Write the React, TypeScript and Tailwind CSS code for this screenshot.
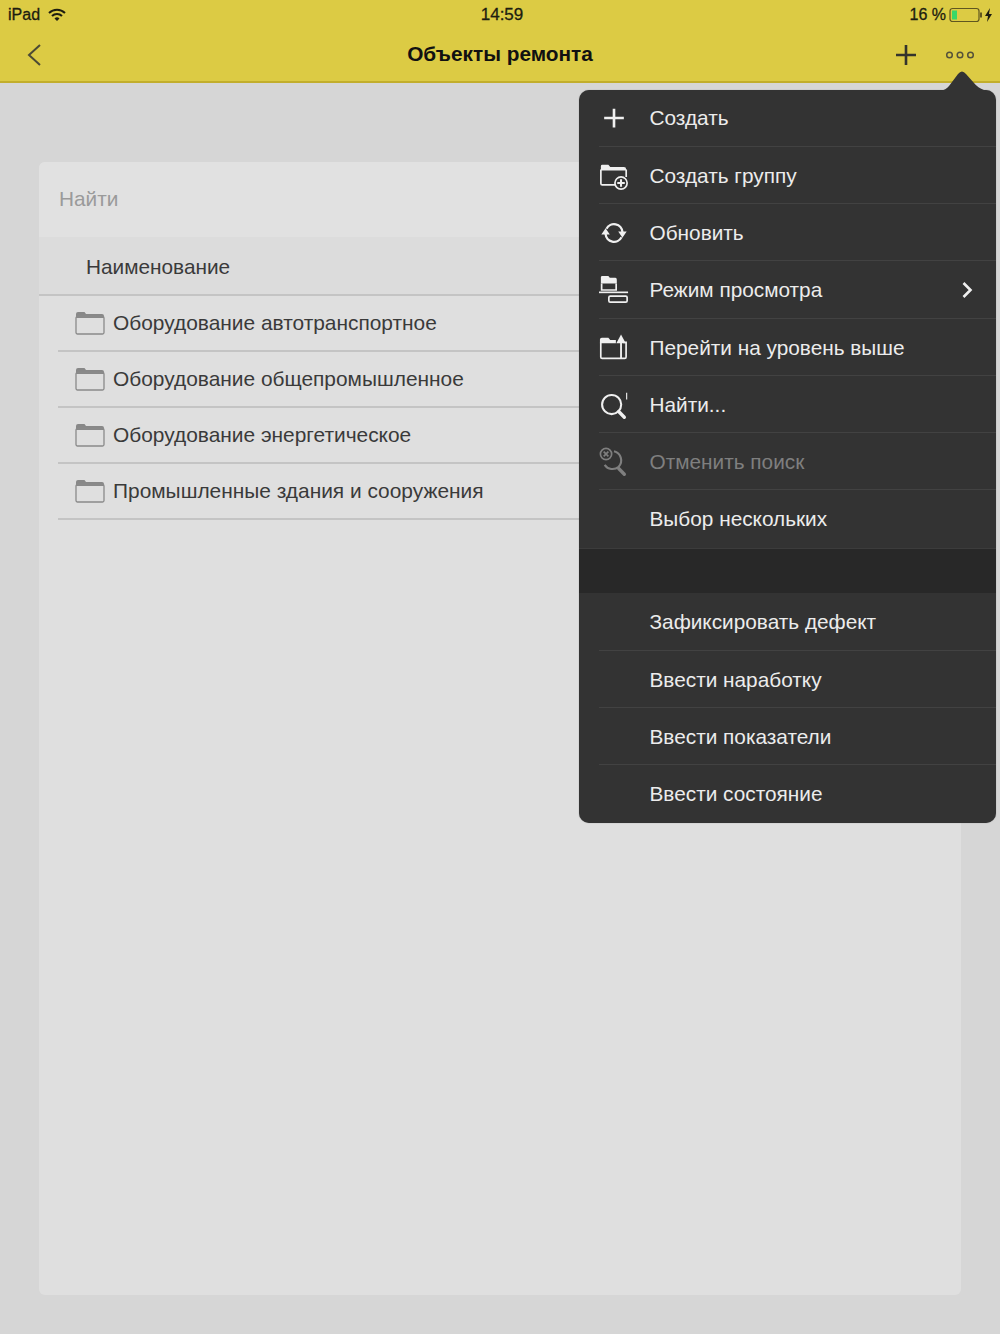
import React from "react";

const font = "font-['Liberation_Sans','Noto_Sans',sans-serif]";

function Ic({ children, op = "" }: { children: React.ReactNode; op?: string }) {
  return (
    <svg width="32" height="32" viewBox="0 0 32 32" fill="none" stroke="#f0f0f0" strokeWidth="1.8" className={op}>
      {children}
    </svg>
  );
}

const icons: Record<string, React.ReactNode> = {
  plus: (
    <Ic>
      <path d="M16 6v20M5.500 16h21" strokeWidth="2.800" />
    </Ic>
  ),
  group: (
    <Ic>
      <path d="M2 10V5.500Q2 4 3.500 4H10l2 2.500h14.500Q29 6.500 29 9v1z" fill="#f0f0f0" stroke="none" />
      <path d="M2 9v15q0 1.500 1.500 1.500H20M29 9v8" />
      <circle cx="23.500" cy="23.500" r="6.500" fill="#333" />
      <path d="M23.500 19.500v8M19.500 23.500h8" strokeWidth="2.200" />
    </Ic>
  ),
  refresh: (
    <Ic>
      <path d="M8 11.500A9 9 0 0 1 25 15M24 20.500A9 9 0 0 1 7 17" strokeWidth="2.400" />
      <path d="M20.500 14.500h9l-4.500 6.500zM2.500 17.500h9l-4.500-6.500z" fill="#f0f0f0" stroke="none" />
    </Ic>
  ),
  view: (
    <Ic>
      <path d="M2 9V2.500Q2 1 3.500 1H10l1.500 2h6Q19 3 19 5v4z" fill="#f0f0f0" stroke="none" />
      <path d="M2.800 9v7h15.500V9" />
      <path d="M0 18.500h31" />
      <rect x="10.500" y="22.500" width="19.500" height="6.500" rx="1.500" />
    </Ic>
  ),
  up: (
    <Ic>
      <path d="M1 11V7Q1 5 3 5h7l2 2.500h6V11z" fill="#f0f0f0" stroke="none" />
      <path d="M1.900 10v15.500q0 1.500 1.500 1.500h24q1.500 0 1.500-1.500V10h-3" />
      <path d="M23.500 27V9" strokeWidth="2" />
      <path d="M18.500 11l5-9.500 5 9.500z" fill="#f0f0f0" stroke="none" />
    </Ic>
  ),
  find: (
    <Ic>
      <circle cx="13.500" cy="15.500" r="10.200" strokeWidth="2.200" />
      <path d="M21 23l6 6" strokeWidth="3.600" strokeLinecap="round" />
      <path d="M29.500 3v7" strokeWidth="1.200" />
    </Ic>
  ),
  cancel: (
    <Ic op="opacity-40">
      <circle cx="7.500" cy="7.500" r="6" />
      <path d="M5 5l5 5M10 5l-5 5" />
      <path d="M16 4.500A10 10 0 0 1 21 21A10 10 0 0 1 6 19" strokeWidth="2.200" />
      <path d="M21 23l6 6" strokeWidth="3.600" strokeLinecap="round" />
    </Ic>
  ),
};

function MenuRow({ icon, label, dim, chevron, last, h }: { icon?: string; label: string; dim?: boolean; chevron?: boolean; last?: boolean; h: string }) {
  return (
    <div className={`relative flex items-center pl-[20px] ${h}`}>
      <div className="w-[30px] flex justify-center shrink-0">{icon && icons[icon]}</div>
      <span className={`ml-[20.500px] text-[20.8px] leading-none ${dim ? "text-[#7f7f7f]" : "text-[#ececec]"}`}>{label}</span>
      {chevron && (
        <svg width="12" height="18" viewBox="0 0 12 18" fill="none" stroke="#f0f0f0" strokeWidth="2.600" className="ml-auto mr-[23px]">
          <path d="M2.500 2l7 7-7 7" />
        </svg>
      )}
      {!last && <div className="absolute left-[20px] right-0 bottom-0 h-px bg-[#424242]" />}
    </div>
  );
}

function Folder() {
  return (
    <svg width="30" height="24" viewBox="0 0 30 24" fill="none" className="shrink-0">
      <path d="M1 7V3Q1 1 3 1h6.500l1.500 2h16q2 0 2 2v2z" fill="#888" />
      <rect x="1" y="5.500" width="28" height="17.500" rx="1.500" stroke="#8a8a8a" strokeWidth="1.300" />
    </svg>
  );
}

function TableRow({ label }: { label: string }) {
  return (
    <div className="pl-[36px] h-[56px] flex items-center relative pb-[2px]">
      <Folder />
      <span className="ml-[8px] text-[20.9px] leading-none text-[#3a3a3a]">{label}</span>
      <div className="absolute left-[19px] right-0 bottom-0 h-[2px] bg-[#c4c4c4]" />
    </div>
  );
}

export default function App() {
  return (
    <div className={`${font} relative w-[1000px] h-[1334px] overflow-hidden bg-[#d6d6d6] flex flex-col`}>
      <header className="h-[83px] shrink-0 bg-[#dccb44] border-b-2 border-[#c2ae2c] relative flex flex-col">
        <div className="h-[28px] pt-[1px] px-[8px] flex items-center text-[16px] text-[#1d1d10] relative [-webkit-text-stroke:0.3px]">
          <span>iPad</span>
          <svg width="18" height="14" viewBox="0 0 18 14" className="ml-[8px]" fill="none" stroke="#1d1d10" strokeWidth="2">
            <path d="M1 5a11.500 11.500 0 0 1 16 0M4 8a7 7 0 0 1 10 0" />
            <path d="M6.500 10.500L9 13l2.500-2.500a3.500 3.500 0 0 0-5 0z" fill="#1d1d10" stroke="none" />
          </svg>
          <span className="absolute left-0 right-0 text-center pl-[4px] text-[17px]">14:59</span>
          <span className="ml-auto mr-[3px]">16 %</span>
          <svg width="44" height="16" viewBox="0 0 44 16" fill="none" className="mr-[-1px]">
            <rect x="1" y="1.500" width="29" height="13" rx="2.500" stroke="#5f5620" strokeWidth="1.200" />
            <rect x="3" y="3.500" width="5" height="9" fill="#38d868" />
            <rect x="31" y="5.500" width="2" height="5" fill="#5f5620" />
            <path d="M42 1l-5 8h3l-1 6 5-8h-3z" fill="#1d1d10" transform="translate(-1 0)" />
          </svg>
        </div>
        <div className="flex-1 relative flex items-center justify-between pl-[26px] pr-[25px] pt-[1px]">
          <svg width="16" height="24" viewBox="0 0 16 24" fill="none" stroke="#4b4a34" strokeWidth="2">
            <path d="M14 2L3 12l11 10" />
          </svg>
          <span className="absolute left-0 right-0 text-center text-[20.800px] font-bold text-[#111] top-[16px] leading-none">Объекты ремонта</span>
          <div className="flex items-center gap-[28px]">
            <svg width="22" height="22" viewBox="0 0 22 22" fill="none" stroke="#34342c" strokeWidth="2.600">
              <path d="M11 1v20M1 11h20" />
            </svg>
            <svg width="30" height="10" viewBox="0 0 30 10" fill="none" stroke="#55523a" strokeWidth="1.500">
              <circle cx="4.500" cy="5" r="2.800" />
              <circle cx="15" cy="5" r="2.800" />
              <circle cx="25.500" cy="5" r="2.800" />
            </svg>
          </div>
        </div>
      </header>

      <main className="flex-1 pt-[79px] pb-[39px] px-[39px]">
        <div className="h-full rounded-[6px] bg-[#dfdfdf] overflow-hidden">
          <div className="h-[75px] pl-[20px] pb-[2px] flex items-center text-[20.8px] text-[#9a9a9a] bg-[#e1e1e1]">Найти</div>
          <div className="h-[59px] pl-[47px] pt-[2px] flex items-center text-[20.8px] text-[#3a3a3a] bg-[#dcdcdc] border-b-2 border-[#c4c4c4]">Наименование</div>
          <TableRow label="Оборудование автотранспортное" />
          <TableRow label="Оборудование общепромышленное" />
          <TableRow label="Оборудование энергетическое" />
          <TableRow label="Промышленные здания и сооружения" />
        </div>
      </main>

      <div className="absolute left-[579px] top-[90px] w-[417px] h-[733px] rounded-[10px] bg-[#333333] flex flex-col shadow-[0_0_1px_#777]">
        <svg width="44" height="24" viewBox="0 0 44 24" className="absolute right-[12px] top-[-21px]">
          <path d="M0 22Q6 21 9 17L18 5Q22 0 26 5L34 14Q38 19 44 21V24H0z" fill="#333333" />
        </svg>
        <MenuRow h="h-[57px] pb-[1px]" icon="plus" label="Создать" />
        <MenuRow h="h-[57px] pt-[1px]" icon="group" label="Создать группу" />
        <MenuRow h="h-[57px] pt-[1px]" icon="refresh" label="Обновить" />
        <MenuRow h="h-[58px]" icon="view" label="Режим просмотра" chevron />
        <MenuRow h="h-[57px] pt-[1px]" icon="up" label="Перейти на уровень выше" />
        <MenuRow h="h-[57px] pt-[1px]" icon="find" label="Найти..." />
        <MenuRow h="h-[57px] pt-[1px]" icon="cancel" label="Отменить поиск" dim />
        <MenuRow h="h-[58px]" label="Выбор нескольких" last />
        <div className="h-[45px] shrink-0 bg-[#282828] border-t border-[#3c3c3c]" />
        <MenuRow h="h-[58px]" label="Зафиксировать дефект" />
        <MenuRow h="h-[57px] pt-[1px]" label="Ввести наработку" />
        <MenuRow h="h-[57px] pt-[1px]" label="Ввести показатели" />
        <MenuRow h="h-[58px]" label="Ввести состояние" last />
      </div>
    </div>
  );
}
